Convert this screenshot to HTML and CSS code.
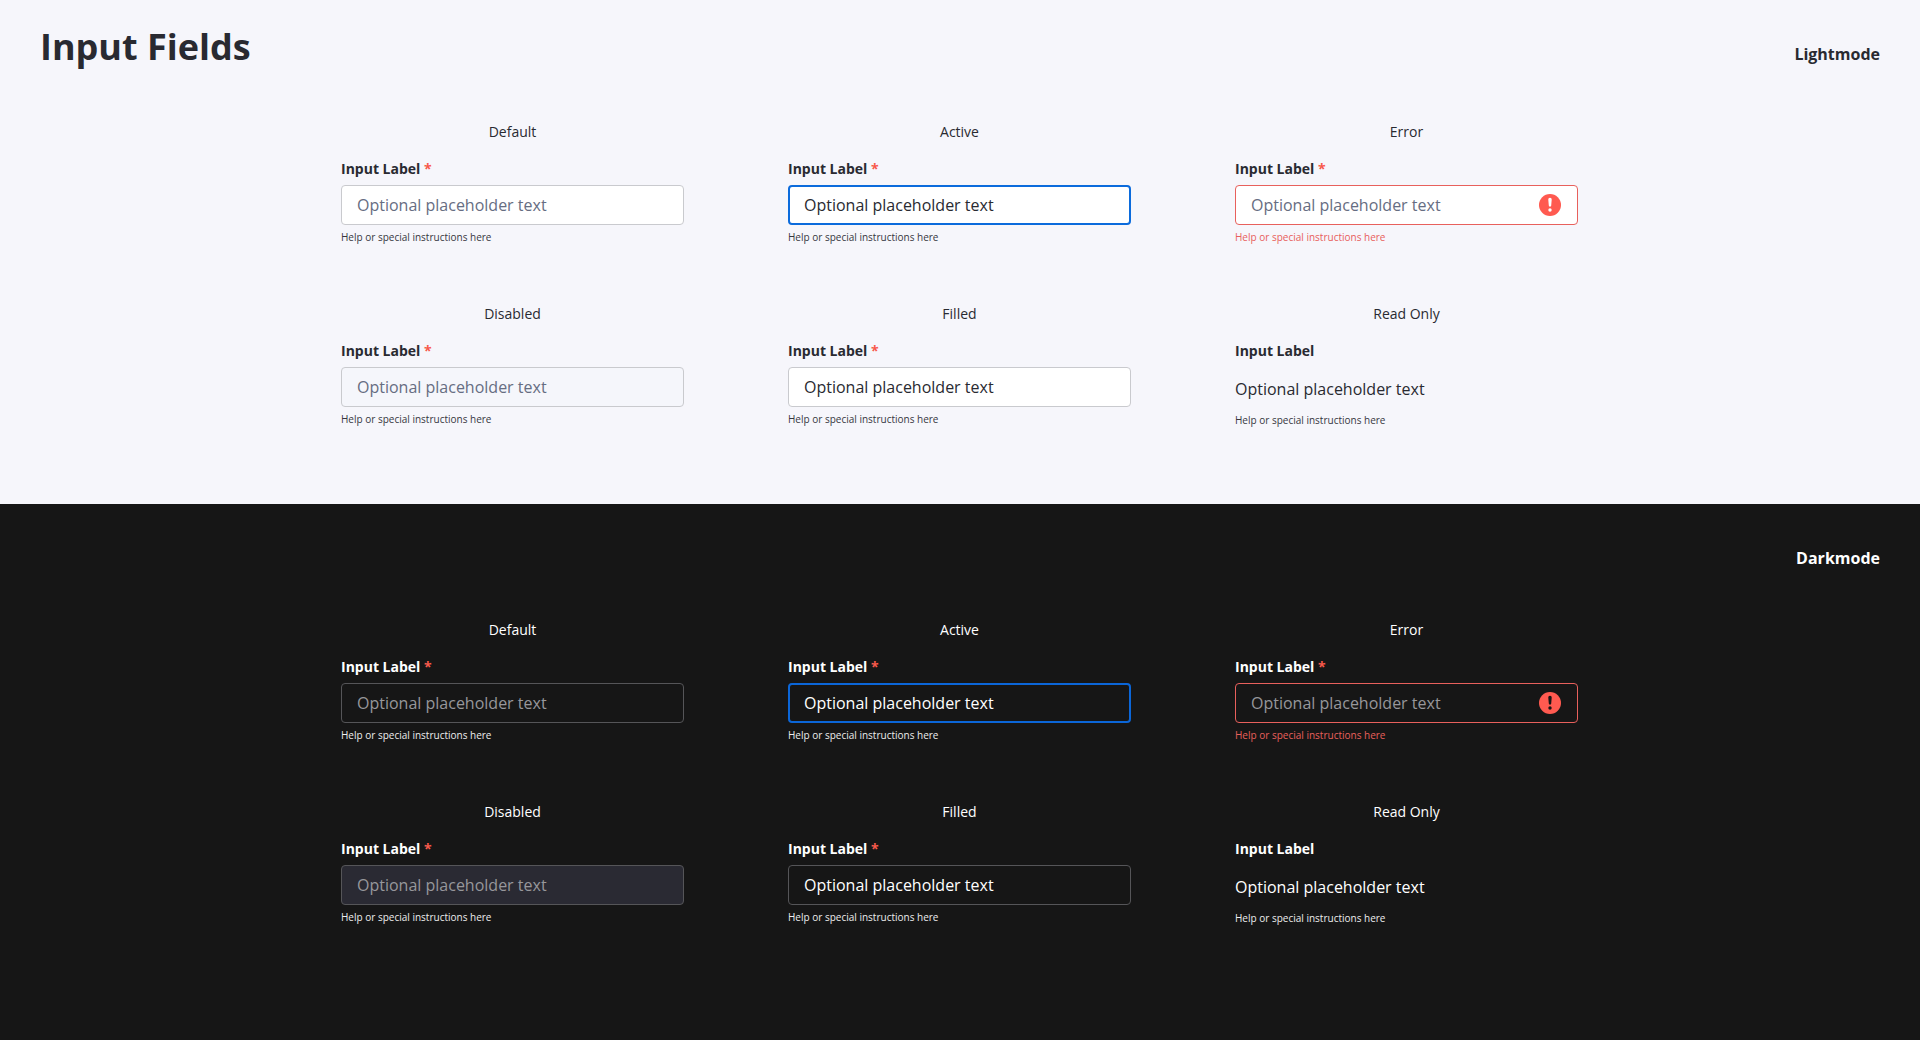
FILE: index.html
```html
<!DOCTYPE html>
<html lang="en">

<head>
  <meta charset="UTF-8">
  <meta name="viewport" content="width=device-width, initial-scale=1.0">
  <title>Input Fields</title>
  <link rel="stylesheet" href="styles.css">
</head>

<body>
  <section class="light">
    <header class="header">
      <h1>Input Fields</h1>
      <p class="mode">Lightmode</p>
    </header>
    <div class="fields">
      <div class="field">
        <p class="state">Default</p>
        <label for="light-default">Input Label <span>*</span></label>
        <div class="control"><input type="text" id="light-default" placeholder="Optional placeholder text"></div>
        <p class="help">Help or special instructions here</p>
      </div>
      <div class="field active">
        <p class="state">Active</p>
        <label for="light-active">Input Label <span>*</span></label>
        <div class="control"><input type="text" id="light-active" value="Optional placeholder text"></div>
        <p class="help">Help or special instructions here</p>
      </div>
      <div class="field error">
        <p class="state">Error</p>
        <label for="light-error">Input Label <span>*</span></label>
        <div class="control">
          <input type="text" id="light-error" placeholder="Optional placeholder text">
          <svg class="icon" viewBox="0 0 22 22">
            <circle cx="11" cy="11" r="11" />
            <path class="mark" d="M11 3.8c1.100 0 1.800.8 1.700 1.900l-.5 5.700c-.1.8-.5 1.200-1.200 1.200s-1.100-.4-1.200-1.200l-.5-5.700c-.1-1.100.6-1.900 1.700-1.900z" />
            <circle class="mark" cx="11" cy="16" r="1.7" />
          </svg>
        </div>
        <p class="help">Help or special instructions here</p>
      </div>
      <div class="field">
        <p class="state">Disabled</p>
        <label for="light-disabled">Input Label <span>*</span></label>
        <div class="control"><input type="text" id="light-disabled" placeholder="Optional placeholder text" disabled></div>
        <p class="help">Help or special instructions here</p>
      </div>
      <div class="field">
        <p class="state">Filled</p>
        <label for="light-filled">Input Label <span>*</span></label>
        <div class="control"><input type="text" id="light-filled" value="Optional placeholder text"></div>
        <p class="help">Help or special instructions here</p>
      </div>
      <div class="field">
        <p class="state">Read Only</p>
        <label for="light-readonly">Input Label</label>
        <div class="control"><input type="text" id="light-readonly" value="Optional placeholder text" readonly></div>
        <p class="help">Help or special instructions here</p>
      </div>
    </div>
  </section>

  <section class="dark">
    <header class="header">
      <p class="mode">Darkmode</p>
    </header>
    <div class="fields">
      <div class="field">
        <p class="state">Default</p>
        <label for="dark-default">Input Label <span>*</span></label>
        <div class="control"><input type="text" id="dark-default" placeholder="Optional placeholder text"></div>
        <p class="help">Help or special instructions here</p>
      </div>
      <div class="field active">
        <p class="state">Active</p>
        <label for="dark-active">Input Label <span>*</span></label>
        <div class="control"><input type="text" id="dark-active" value="Optional placeholder text"></div>
        <p class="help">Help or special instructions here</p>
      </div>
      <div class="field error">
        <p class="state">Error</p>
        <label for="dark-error">Input Label <span>*</span></label>
        <div class="control">
          <input type="text" id="dark-error" placeholder="Optional placeholder text">
          <svg class="icon" viewBox="0 0 22 22">
            <circle cx="11" cy="11" r="11" />
            <path class="mark" d="M11 3.8c1.100 0 1.800.8 1.700 1.900l-.5 5.700c-.1.8-.5 1.200-1.200 1.200s-1.100-.4-1.200-1.200l-.5-5.700c-.1-1.100.6-1.900 1.700-1.900z" />
            <circle class="mark" cx="11" cy="16" r="1.7" />
          </svg>
        </div>
        <p class="help">Help or special instructions here</p>
      </div>
      <div class="field">
        <p class="state">Disabled</p>
        <label for="dark-disabled">Input Label <span>*</span></label>
        <div class="control"><input type="text" id="dark-disabled" placeholder="Optional placeholder text" disabled></div>
        <p class="help">Help or special instructions here</p>
      </div>
      <div class="field">
        <p class="state">Filled</p>
        <label for="dark-filled">Input Label <span>*</span></label>
        <div class="control"><input type="text" id="dark-filled" value="Optional placeholder text"></div>
        <p class="help">Help or special instructions here</p>
      </div>
      <div class="field">
        <p class="state">Read Only</p>
        <label for="dark-readonly">Input Label</label>
        <div class="control"><input type="text" id="dark-readonly" value="Optional placeholder text" readonly></div>
        <p class="help">Help or special instructions here</p>
      </div>
    </div>
  </section>
</body>

</html>
```

FILE: styles.css
```css
* {
  padding: 0;
  margin: 0;
  box-sizing: border-box;
}

body {
  display: flex;
  flex-direction: column;
  min-height: 100vh;
  font-family: "Open Sans", sans-serif;
  font-size: 14px;
  line-height: 20px;
}

.light {
  --bg: #f6f6fb;
  --text: #292a31;
  --help: #36373e;
  --placeholder: #666d82;
  --border: #c9cace;
  --input: #fff;
  --disabled: #f5f6fb;
  --focus: #0b6bdc;
  --mark: #fff;
  padding-bottom: 76px;
}

.dark {
  --bg: #161616;
  --text: #fff;
  --help: #ededed;
  --placeholder: #97979b;
  --border: #555558;
  --input: #161616;
  --disabled: #2a2a33;
  --focus: #0b66d8;
  --mark: #161616;
  flex: 1;
  padding-bottom: 40px;
}

.light,
.dark {
  background: var(--bg);
  color: var(--text);
}

.header {
  display: flex;
  align-items: flex-start;
  min-height: 74px;
  padding: 20px 40px 0;
}

.header h1 {
  font-size: 36px;
  line-height: 54px;
}

.header .mode {
  margin: 22px 0 0 auto;
  font-size: 16px;
  font-weight: 700;
  line-height: 24px;
}

.fields {
  display: grid;
  grid-template-columns: repeat(3, minmax(0, 343px));
  justify-content: center;
  gap: 59px 104px;
  padding: 48px 41px 0 40px;
}

.dark .fields {
  padding-top: 42px;
}

.field .state {
  margin-bottom: 17px;
  text-align: center;
}

.field label {
  display: block;
  margin-bottom: 6px;
  font-weight: 700;
}

.field label span {
  color: #f8594b;
}

.control {
  position: relative;
}

.control input {
  display: block;
  width: 100%;
  height: 40px;
  padding: 0 15px;
  border: 1px solid var(--border);
  border-radius: 4px;
  outline: none;
  background: var(--input);
  color: var(--text);
  font-family: inherit;
  font-size: 16px;
}

.control input::placeholder {
  color: var(--placeholder);
  opacity: 1;
}

.control input:disabled {
  background: var(--disabled);
}

.control input:read-only:not(:disabled) {
  height: 41px;
  padding: 3px 0 0;
  border: 0;
  background: none;
}

.active .control input {
  padding: 0 14px;
  border: 2px solid var(--focus);
}

.error .control input {
  padding-right: 48px;
  border-color: #e8605c;
}

.control .icon {
  position: absolute;
  top: 9px;
  right: 17px;
  width: 22px;
  height: 22px;
  fill: #ff5a50;
}

.control .icon .mark {
  fill: var(--mark);
}

.field .help {
  margin-top: 4px;
  color: var(--help);
  font-size: 10px;
  line-height: 16px;
}

.error .help {
  color: #e8605c;
}
```
